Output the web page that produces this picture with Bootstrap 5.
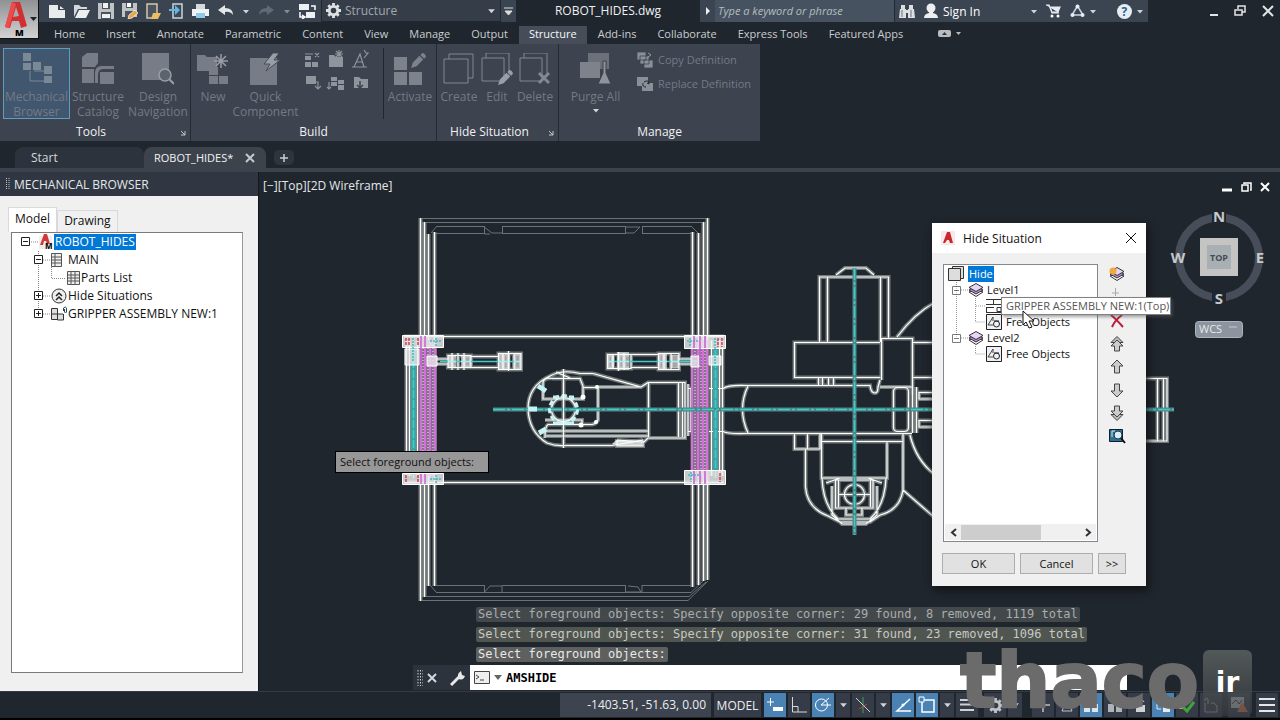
<!DOCTYPE html>
<html lang="en">
<head>
<meta charset="utf-8">
<meta name="viewport" content="width=device-width, initial-scale=1">
<title>ROBOT_HIDES.dwg</title>
<link href="https://cdn.jsdelivr.net/npm/bootstrap@5.3.0/dist/css/bootstrap.min.css" rel="stylesheet">
<style>
:root{--ink:#20262e;--panel:#3d434f;--dim:#757a84}
body{background:var(--ink);color:#d6d9dd;font:12px/15px "Open Sans","Noto Sans",sans-serif;min-width:1180px}
button,input,select{font:inherit;color:inherit;background:none;border:0;padding:0}
button{line-height:15px;white-space:nowrap}
svg{display:block;flex:none}
a{color:inherit;text-decoration:none}
/* title bar */
.app-btn{width:39px;height:39px;background:linear-gradient(#8f9193,#d2d2d2);border-right:1px solid #111;border-bottom:1px solid #111}
.title-bar{height:22px}
.bar-fill{background:#3b4552}
.quick{width:282px;padding-left:9px;gap:8px}
.workspace{width:180px;background:#353d49;border:1px solid #222831;border-top:0}
.workspace select{appearance:none;color:#a2a8ae;width:130px}
.more-cell{width:15px}
.doc-title{color:#eef0f2;line-height:22px}
.search{width:180px;background:#46525f;border-right:1px solid #222831}
.search input{width:100%;font-style:italic;font-size:11px;padding-left:3px;line-height:16px}
.search input::placeholder{color:#b6bcc2;opacity:1}
.account{width:253px}
.window-ctl{width:132px;padding-right:6px}
.ribbon-tabs{height:22px;padding-top:4px;padding-left:5px;font-size:11px;gap:1px}
.ribbon-tabs a{padding:0 10px;line-height:16px;height:18px;white-space:nowrap;color:#c9cdd1}
.ribbon-tabs a.on{background:#464d58;color:#f5f6f7}
/* ribbon */
.ribbon{height:97px}
.r-panel{background:var(--panel);border-right:1px solid #252b33;color:var(--dim);position:relative}
.panel-tools{width:191px}
.panel-build{width:246px}
.panel-hide{width:122px}
.panel-manage{width:201px}
.r-panel h2{font-size:12px;line-height:18px;color:#f0f1f3;margin:0;text-align:center}
.r-body{height:79px;padding-top:4px;padding-left:3px}
.r-btn{height:71px;padding-top:4px;display:flex;flex-direction:column;align-items:center;gap:4px;border:1px solid transparent;color:var(--dim)}
.r-btn.on{background:#41566f;border-color:#5e9dc0}
.w-wide{width:67px}
.w-mid{width:56px}
.w-slim{width:38px}
.r-rule{height:71px;width:1px;background:#22272e}
.corner{position:absolute;right:4px;bottom:5px}
.row-btn{display:flex;align-items:center;gap:5px;font-size:11px;line-height:24px;color:var(--dim)}
/* document tabs */
.doc-tabs{height:31px;padding:6px 0 0 15px;border-bottom:4px solid #3d434c}
.doc-tabs .tab-item{height:21px;line-height:21px;border-radius:8px 8px 0 0}
.start-tab{width:129px;background:#2c333d;padding-left:16px}
.file-tab{width:122px;background:#3d434c;color:#f2f3f4;padding:0 11px 0 10px;font-size:11px}
/* browser palette */
.work-row{min-height:0}
.palette{width:259px;border-right:1px solid #14181d;background:#f0f0f0;color:#111}
.palette-title{height:24px;background:#303742;color:#e4e7ea;line-height:21px;padding-left:6px}
.sheet-tabs{padding:12px 0 0 8px;height:36px}
.sheet-tabs button{border:1px solid #d9d9d9;border-bottom:0;padding:0 6px 3px;height:22px}
.sheet-tabs .on{background:#fff;height:25px}
.tree-box{background:#fff;border:1px solid #7a7a7a;border-right-color:#999;margin:0 15px 18px 11px}
.tree-line{height:18px;line-height:18px;display:flex;align-items:center;white-space:nowrap}
.picked{background:#0078d7;color:#fff;padding:0 2px}
.tree-line .picked{line-height:16px;padding:0 1px}
/* drawing area */
.view-label{position:absolute;left:4px;top:5px;color:#e4e6e8;line-height:18px}
.win-ctl{position:absolute;right:10px;top:10px}
.prompt{position:absolute;left:76px;top:279px;width:154px;height:22px;background:#979797;border:1px solid #000;color:#111;font-size:11px;line-height:19px;padding-left:4px}
.cube{position:absolute;right:12px;top:34px}
/* dialog */
.hide-dialog{position:absolute;right:134px;top:51px;width:214px;height:363px;background:#f0f0f0;color:#111;box-shadow:2px 4px 8px #111;font-size:11px}
.hide-head{height:30px;background:#fff;font-size:12px;padding:0 9px}
.level-box{width:155px;height:278px;margin:11px 0 0 11px;background:#fff;border:1px solid #828790;padding-top:1px}
.level-line{height:16px;line-height:16px;display:flex;align-items:center;white-space:nowrap;padding-left:4px}
.level-line .picked{padding:0 1px}
.side-tools{padding:14px 0 0 11px;gap:7px}
.scroll-row{height:16px;background:#f0f0f0;margin:0 1px 1px;display:flex;align-items:center;justify-content:space-between;padding:0 4px 0 5px}
.thumb{width:80px;height:15px;background:#cdcdcd;margin-right:40px}
.dlg-foot{gap:5px;padding:3px 0 0 10px}
.dlg-btn{width:73px;height:21px;background:#e1e1e1;border:1px solid #adadad;line-height:18px}
.dlg-btn.short{width:28px}
.hint{position:absolute;left:69px;top:74px;width:170px;height:18px;background:#fff;border:1px solid #808080;box-shadow:2px 2px 3px #5558;color:#555;line-height:16px;padding-left:4px;white-space:nowrap}
.pointer{position:absolute;left:90px;top:87px}
/* command line */
.cmd{position:absolute;left:154px;right:153px;bottom:1px}
.history{font:12px/15px "DejaVu Sans Mono","Liberation Mono",monospace;margin:0 0 3px 63px;gap:5px}
.history span{background:#43484b;color:#a9adb0;padding:0 2px;border-radius:2px;white-space:nowrap}
.history span:nth-child(2){background:#50554f;color:#c6c9c6}
.history span:nth-child(3){background:#5e5f5f;color:#e8e8e8}
.cmd-bar{height:25px;background:#2c333d}
.cmd-grip{width:57px}
.cmd-field{background:#fff;color:#000}
.cmd-field input{font:bold 12px/15px "DejaVu Sans Mono","Liberation Mono",monospace;width:300px;padding-top:2px}
/* status bar */
.status{height:29px;border-top:1px solid #343b45;border-bottom:2px solid #000;background:#20262e;padding:1px 2px 1px 0}
.coords{width:151px;background:var(--panel);padding-right:5px;line-height:23px;color:#eceef0;text-align:right}
.model{width:47px;background:#363c48;color:#eceef0;margin:0 3px;height:24px}
.s-tools{gap:2px}
.s-btn{height:24px;width:22px;display:grid;place-items:center;background:#353b47}
.s-btn.on{background:#4a82b4}
.s-btn.arrow{width:14px}
/* channel logo */
.mark-word{position:absolute;right:81px;bottom:-20px;font:700 76px/60px "DejaVu Sans",sans-serif;color:#6b6b6b;-webkit-text-stroke:2px #6b6b6b;z-index:3}
.mark-box{position:absolute;right:28px;bottom:-25px;width:49px;height:66px;border-radius:6px;background:linear-gradient(#5b605fdd,#383d43aa);color:#fff;font:700 28px/66px "DejaVu Sans",sans-serif;text-align:center;z-index:3}
</style>
</head>
<body class="vh-100 d-flex flex-column overflow-hidden">

<svg width="0" height="0" class="position-absolute" aria-hidden="true">
<defs>
<symbol id="dn" viewBox="0 0 8 5"><path d="M1 1h6L4 4.500z" fill="#d0d4d8"/></symbol>
<symbol id="layers" viewBox="0 0 16 14"><path d="M1 9l7-3 7 3-7 4.500z" fill="#fff" stroke="#333"/><path d="M1 7l7-4 7 4-7 4z" fill="#b48bd0" stroke="#333"/><path d="M1 4.500l7-4 7 4-7 4z" fill="#e7d5f1" stroke="#333"/></symbol>
<symbol id="freeobj" viewBox="0 0 16 16"><path d="M.5.5h15v15H.5z" fill="#eef0f3" stroke="#222"/><path d="M2 11l5-8v4M2 11h5" fill="none" stroke="#444"/><circle cx="10.500" cy="10" r="3" fill="none" stroke="#222"/><path d="M8 7h5" stroke="#222"/></symbol>
<symbol id="minus" viewBox="0 0 9 9"><path d="M.5.5h8v8h-8z" fill="#fff" stroke="#222"/><path d="M2 4.500h5" stroke="#222"/></symbol>
<symbol id="plus" viewBox="0 0 9 9"><path d="M.5.5h8v8h-8z" fill="#fff" stroke="#222"/><path d="M2 4.500h5M4.500 2v5" stroke="#222"/></symbol>
<symbol id="up" viewBox="0 0 16 16"><path d="M8 1l6 6h-3.500v7h-5V7H2z" fill="#ccc" stroke="#444"/></symbol>
<symbol id="upup" viewBox="0 0 16 16"><path d="M8 .5l6 6H2z" fill="#bbb" stroke="#444"/><path d="M8 4l6 6h-3.500v5h-5v-5H2z" fill="#ccc" stroke="#444"/></symbol>
<symbol id="pencil" viewBox="0 0 16 16"><path d="M0 16l2-6 7-7 4 4-7 7zM10 2l2-2q3 0 4 4l-2 2z"/></symbol>
</defs>
</svg>

<header class="d-flex">
  <button class="app-btn" aria-label="Application menu">
    <svg width="38" height="38" viewBox="0 0 38 38"><path d="M5 27L12 2h8l7 24-6 2-2-7h-7l-2 7z" fill="#d22f33"/><path d="M13 17l3-10 3 9z" fill="#a5adb0"/><path d="M12 2l4 2-7 24-4-1z" fill="#ef4a4c"/><path d="M30 17h7l-3.500 4z" fill="#222"/><text x="15" y="36" font-size="9" font-weight="800">M</text></svg>
  </button>
  <div class="flex-grow-1">
    <div class="title-bar d-flex">
      <div class="quick bar-fill d-flex align-items-center">
        <svg width="17" height="16" viewBox="0 0 17 16"><path d="M1 2h9v5h7v8H1zM12 3l4 3h-4z" fill="#e9ebed"/></svg>
        <svg width="17" height="16" viewBox="0 0 17 16"><path d="M1 14V2h5l2 2h6v2H5z" fill="#d4d7d9"/><path d="M2 15l4-8h11l-4 8z" fill="#eceeef"/></svg>
        <svg width="16" height="16" viewBox="0 0 16 16"><path d="M0 0h16v16H0z" fill="#bfc3c6"/><path d="M4 0h8v6H4zM3 9h10v7H3z" fill="#4a535e"/><path d="M5 0h5v5H5zM4 11h8v4H4z" fill="#f1f1f1"/></svg>
        <svg width="16" height="16" viewBox="0 0 16 16"><path d="M0 0h15v14H0z" fill="#bfc3c6"/><path d="M4 0h7v5H4zM3 8h9v6H3z" fill="#4a535e"/><path d="M5 0h4v4H5z" fill="#fff"/><path d="M7 12l6-5 3 3-6 5-4 1z" fill="#e8a94c" stroke="#fff" stroke-width=".7"/></svg>
        <svg width="15" height="17" viewBox="0 0 15 17"><path d="M1 1h10v14H1z" fill="#4a5460" stroke="#d6c6a4" stroke-width="1.500"/><path d="M5 16l2-6h8l-3 6z" fill="#edbd62"/></svg>
        <svg width="15" height="17" viewBox="0 0 15 17"><path d="M4 1h9v14H4z" fill="#3e4854" stroke="#c5d5df" stroke-width="1.500"/><path d="M0 6h6V2l5 5-5 5V8H0z" fill="#61b7e0"/></svg>
        <svg width="17" height="16" viewBox="0 0 17 16"><path d="M4 1h9v5H4z" fill="#d6d9db"/><path d="M0 6h17v7H0z" fill="#f0f1f2"/><path d="M4 10h9v5H4z" fill="#8ccae8"/></svg>
        <svg width="17" height="14" viewBox="0 0 17 14"><path d="M1 6l7-5v3q8 0 8 7-3-4-8-3v3z" fill="#e4e6e8"/></svg>
        <svg width="8" height="5"><use href="#dn"/></svg>
        <svg width="17" height="14" viewBox="0 0 17 14"><path d="M16 6L9 1v3Q1 4 1 11q3-4 8-3v3z" fill="#616974"/></svg>
        <svg width="8" height="5" opacity=".5"><use href="#dn"/></svg>
        <svg width="17" height="16" viewBox="0 0 17 16"><path d="M0 1h10v6H0zM7 9h9v6H7z" fill="#eef0f1"/><path d="M12 3h4v4M1 9v5h4M3 12l3 2-3 2" fill="none" stroke="#fff" stroke-width="1.500"/></svg>
        <svg width="8" height="5"><use href="#dn"/></svg>
      </div>
      <label class="workspace d-flex align-items-center gap-1 ps-1">
        <svg width="15" height="15" viewBox="-8 -8 16 16"><circle r="4.500" fill="none" stroke="#dfe2e4" stroke-width="3"/><path d="M0-8V-5M0 5v3M-8 0h3M5 0h3M-5.500-5.500l2 2M3.500 3.500l2 2M5.500-5.500l-2 2M-3.500 3.500l-2 2" stroke="#dfe2e4" stroke-width="3"/></svg>
        <select aria-label="Workspace"><option>Structure</option></select>
        <svg width="9" height="6" class="ms-auto me-1"><use href="#dn"/></svg>
      </label>
      <div class="more-cell bar-fill d-flex align-items-center justify-content-center"><svg width="9" height="9"><path d="M0 1h9M1 4h7L4.500 8z" fill="#ddd" stroke="#ddd"/></svg></div>
      <div class="doc-title text-center flex-grow-1">ROBOT_HIDES.dwg</div>
      <div class="more-cell bar-fill d-flex align-items-center justify-content-center"><svg width="6" height="8"><path d="M1 0v8l4-4z" fill="#eee"/></svg></div>
      <div class="search d-flex align-items-center"><input type="text" placeholder="Type a keyword or phrase" aria-label="Search"></div>
      <div class="account bar-fill d-flex align-items-center">
        <svg width="16" height="15" viewBox="0 0 16 15" class="ms-1"><path d="M2 1h4v4H2zM10 1h4v4h-4zM1 5h6v9H0zM9 5h6l1 9H9zM7 6h2v3H7z" fill="#dce0e3"/><path d="M3 6v7M12 6v7" stroke="#66707b"/></svg>
        <svg width="16" height="16" viewBox="0 0 16 16" class="ms-2"><circle cx="8" cy="5" r="4.500" fill="#eceef0"/><path d="M1 15q0-4 5-5V8h4v2q5 1 5 5z" fill="#eceef0"/></svg>
        <a href="#" class="ms-1 text-white">Sign In</a>
        <svg width="8" height="5" class="ms-auto me-2"><use href="#dn"/></svg>
        <svg width="16" height="14" viewBox="0 0 16 14"><path d="M0 1h3l3 8h7M4 3h10l-2 5H6z" fill="#e7ecf2" stroke="#e7ecf2" stroke-width="1.200"/><circle cx="6" cy="12" r="1.500" fill="#fff"/><circle cx="12" cy="12" r="1.500" fill="#fff"/></svg>
        <svg width="15" height="14" viewBox="0 0 15 14" class="ms-2"><path d="M7.500 2L2 11h11z" fill="none" stroke="#c5d6e6" stroke-width="1.500"/><circle cx="7.500" cy="2.500" r="2" fill="#e4ecf4"/><circle cx="2.500" cy="11" r="2" fill="#e4ecf4"/><circle cx="12.500" cy="11" r="2" fill="#e4ecf4"/></svg>
        <svg width="8" height="5" class="ms-1 me-3"><use href="#dn"/></svg>
        <svg width="15" height="15" viewBox="0 0 15 15" class="ms-1"><circle cx="7.500" cy="7.500" r="7.500" fill="#e6edf3"/><text x="4.500" y="12" font-size="12" font-weight="700" fill="#2c5f91">?</text></svg>
        <svg width="8" height="5" class="ms-1 me-1"><use href="#dn"/></svg>
      </div>
      <div class="window-ctl d-flex justify-content-end align-items-center gap-3">
        <svg width="8" height="12"><path d="M0 10h8" stroke="#e2e4e6" stroke-width="2"/></svg>
        <svg width="12" height="12"><path d="M4 4V1h7v6H8M1 5h7v5H1z" fill="none" stroke="#e2e4e6" stroke-width="1.500"/></svg>
        <svg width="12" height="12"><path d="M1 1l10 10M11 1L1 11" stroke="#e2e4e6" stroke-width="2"/></svg>
      </div>
    </div>
    <nav class="ribbon-tabs d-flex">
      <a href="#">Home</a><a href="#">Insert</a><a href="#">Annotate</a><a href="#">Parametric</a><a href="#">Content</a><a href="#">View</a><a href="#">Manage</a><a href="#">Output</a><a href="#" class="on">Structure</a><a href="#">Add-ins</a><a href="#">Collaborate</a><a href="#">Express Tools</a><a href="#">Featured Apps</a>
      <svg width="24" height="16" viewBox="0 0 24 16" class="ms-4"><rect y="4" width="13" height="7" rx="2" fill="#b9bdc1"/><path d="M4 9l2.500-3L9 9z" fill="#333"/><path d="M18 6h5l-2.500 3z" fill="#b9bdc1"/></svg>
    </nav>
  </div>
</header>

<section class="ribbon d-flex" aria-label="Ribbon">
  <div class="r-panel panel-tools">
    <div class="r-body d-flex">
      <button class="r-btn on w-wide"><svg width="32" height="32" viewBox="0 0 32 32" fill="#7b8896"><path d="M2 0h8v8H2zM2 10h8v7H2zM12 9h8v8h-8zM23 13h8v8h-8zM23 23h8v7h-8z"/><path d="M9 18v10h14M13 18h10" fill="none" stroke="#7b8896"/></svg>Mechanical<br>Browser</button>
      <button class="r-btn w-mid"><svg width="34" height="32" viewBox="0 0 34 32" fill="#777c86"><path d="M1 4l5-4h11v10l-3 4H1zM1 16h12v14H1zM14 20q0-7 7-7h12v3H22q-5 0-5 6v8h-3zM19 19h14v12H19z"/></svg>Structure<br>Catalog</button>
      <button class="r-btn flex-grow-1"><svg width="32" height="32" viewBox="0 0 32 32"><path d="M0 0h27v27H0z" fill="#777c86"/><circle cx="23" cy="22" r="6" fill="#5d636d" stroke="#9a9ea6" stroke-width="1.500"/><path d="M27 26l5 5" stroke="#9a9ea6" stroke-width="2"/></svg>Design<br>Navigation</button>
    </div>
    <h2 class="pe-2">Tools</h2>
    <svg class="corner" width="6" height="6"><path d="M1 1l4 4M5 1v4H1" fill="none" stroke="#c5c8cc"/></svg>
  </div>
  <div class="r-panel panel-build">
    <div class="r-body d-flex">
      <button class="r-btn w-slim"><svg width="32" height="32" viewBox="0 0 32 32" fill="#777c86"><path d="M0 2h8l2 2h10v14H0zM12 14h9v8h-9zM12 23h9v8h-9zM22 23h9v8h-9z"/><path d="M24 1v14M17 8h14M19 3l10 10M29 3L19 13" stroke="#999da5" stroke-width="1.500"/></svg>New</button>
      <button class="r-btn w-wide"><svg width="32" height="32" viewBox="0 0 32 32"><path d="M0 5h27v27H0z" fill="#777c86"/><path d="M23 0l-9 11h6l-4 7 14-11h-6l5-7z" fill="#9a9ea6" stroke="#484e58"/></svg>Quick<br>Component</button>
      <svg width="80" height="48" viewBox="0 0 80 48" fill="#90949c" class="ms-1"><path d="M2 8h6v4H2zM2 14h6v5H2zM9 14h6v5H9zM26 7h5l2 2h7v10H26zM3 28h10v8H3zM28 29h6v4h-6zM35 32h6v4h-6zM35 37h6v5h-6zM28 34h6v4h-6zM51 29h5l2 2h7v9H51z"/><path d="M2 6h8M12 5l4 4M16 5l-4 4M36 2v8M32 6h8M33 3l6 6M39 3l-6 6M61 2l2 3h2l-4 5M51 19l6-13 4 13M49 19h15M53 14h7M9 34h6v6M12 38l3 3 3-3M26 34v7M24 39l2 2 2-2" fill="none" stroke="#90949c" stroke-width="1.200"/><path d="M57 33v6M54 37l3 3 3-3" fill="none" stroke="#3d434f" stroke-width="1.500"/></svg>
      <div class="r-rule"></div>
      <button class="r-btn flex-grow-1"><svg width="34" height="32" viewBox="0 0 34 32" fill="#7d828b"><path d="M1 4h13v13H1zM1 19h13v13H1zM16 19h13v13H16z"/><svg x="18" y="0" width="15" height="15"><use href="#pencil"/></svg></svg>Activate</button>
    </div>
    <h2>Build</h2>
  </div>
  <div class="r-panel panel-hide">
    <div class="r-body d-flex">
      <button class="r-btn w-slim"><svg width="32" height="32" viewBox="0 0 32 32" fill="none" stroke="#838891"><path d="M1 6h24v24H1zM6 6V1h24v24h-5"/></svg>Create</button>
      <button class="r-btn w-slim"><svg width="32" height="32" viewBox="0 0 32 32" fill="none" stroke="#838891"><path d="M1 5h22v23H1zM5 5V0h23v23h-5"/><svg x="17" y="17" width="15" height="15" fill="#9a9ea6" stroke="none"><use href="#pencil"/></svg></svg>Edit</button>
      <button class="r-btn w-slim"><svg width="32" height="32" viewBox="0 0 32 32" fill="none" stroke="#838891"><path d="M1 5h22v23H1zM5 5V0h23v23h-5"/><path d="M20 20l10 10M30 20L20 30" stroke-width="3"/></svg>Delete</button>
    </div>
    <h2 class="pe-3">Hide Situation</h2>
    <svg class="corner" width="6" height="6"><path d="M1 1l4 4M5 1v4H1" fill="none" stroke="#c5c8cc"/></svg>
  </div>
  <div class="r-panel panel-manage border-0">
    <div class="r-body d-flex">
      <button class="r-btn w-wide"><svg width="32" height="32" viewBox="0 0 32 32"><path d="M8 0h21v16H8z" fill="#6b7079"/><path d="M0 9h20v16H0z" fill="#7d828b"/><path d="M23 8h3v12l5 11H18l5-11z" fill="#8f939b" stroke="#3d434f"/></svg>Purge All<svg width="8" height="5"><use href="#dn"/></svg></button>
      <div class="ms-1 ps-1">
        <button class="row-btn"><svg width="16" height="16" viewBox="0 0 16 16" fill="#8b8f97" stroke="#3d434f" stroke-width=".8"><path d="M0 0h9v8H0zM3 4h9v8H3zM7 8h9v8H7z"/><path d="M11 1l3 2-3 2" stroke="#aaa" fill="none"/></svg>Copy Definition</button>
        <button class="row-btn"><svg width="16" height="16" viewBox="0 0 16 16" fill="#8b8f97"><path d="M0 1h11v9H0zM5 7h11v8H5z"/><path d="M7 6q5-3 5 2l-2-1M9 11q-4 0-3-4" fill="none" stroke="#22272e"/></svg>Replace Definition</button>
      </div>
    </div>
    <h2>Manage</h2>
  </div>
</section>

<nav class="doc-tabs d-flex align-items-center">
  <a href="#" class="tab-item start-tab">Start</a>
  <a href="#" class="tab-item file-tab d-flex align-items-center">ROBOT_HIDES*<svg width="10" height="10" class="ms-auto"><path d="M1 1l8 8M9 1L1 9" stroke="#c5c8cc" stroke-width="2"/></svg></a>
  <button class="ms-1 px-1" aria-label="New tab"><svg width="20" height="16" viewBox="0 0 20 16"><rect width="20" height="15" rx="5" fill="#2f353e"/><path d="M6 8h8M10 4v8" stroke="#cbced1" stroke-width="1.500"/></svg></button>
</nav>

<main class="work-row d-flex flex-grow-1">
  <aside class="palette d-flex flex-column flex-shrink-0">
    <div class="palette-title d-flex align-items-center gap-1"><svg width="4" height="12"><path d="M.5 0v12M3 0v12" stroke="#c5c8cc" stroke-dasharray="1 1"/></svg>MECHANICAL BROWSER</div>
    <div class="sheet-tabs d-flex align-items-end"><button class="on">Model</button><button>Drawing</button></div>
    <div class="tree-box flex-grow-1">
      <div class="tree-line ps-2"><svg width="34" height="18" viewBox="0 0 34 18"><svg x="1" y="4" width="9" height="9"><use href="#minus"/></svg><path d="M11 9h7" stroke="#888" stroke-dasharray="1 1"/><path d="M19 3h13v13H19z" fill="#eee"/><path d="M20 12L24 1h3l3 10h-3l-1-3h-2l-1 4z" fill="#d2373b"/><text x="25" y="16" font-size="8" font-weight="700">M</text></svg><span class="picked">ROBOT_HIDES</span></div>
      <div class="tree-line ps-3"><svg width="40" height="18" viewBox="0 0 40 18" fill="none"><path d="M10.500 0v18M15 9h8M23.500 14v4" stroke="#888" stroke-dasharray="1 1"/><svg x="6" y="4" width="9" height="9"><use href="#minus"/></svg><path d="M23.500 2.500h10v13h-10zM23 6h11M23 9h11M23 12h11M27 3v12" fill="#eee" stroke="#555"/></svg>MAIN</div>
      <div class="tree-line ps-3"><svg width="53" height="18" viewBox="0 0 53 18" fill="none"><path d="M10.500 0v18M23.500 0v9.500h14" stroke="#888" stroke-dasharray="1 1"/><path d="M39.500 2.500h12v13h-12zM39 6h13M39 9h13M39 12h13M43 3v12M47 3v12" fill="#eee" stroke="#555"/></svg>Parts List</div>
      <div class="tree-line ps-3"><svg width="40" height="18" viewBox="0 0 40 18"><path d="M10.500 0v18M15 9h8" stroke="#888" stroke-dasharray="1 1"/><svg x="6" y="4" width="9" height="9"><use href="#plus"/></svg><circle cx="31" cy="9" r="7" fill="#eee" stroke="#333"/><path d="M28 9l3-3 3 3M28 13l3-3 3 3" fill="none" stroke="#222" stroke-width="1.500"/></svg>Hide Situations</div>
      <div class="tree-line ps-3"><svg width="40" height="18" viewBox="0 0 40 18"><path d="M10.500 0v9M15 9h8" stroke="#888" stroke-dasharray="1 1"/><svg x="6" y="4" width="9" height="9"><use href="#plus"/></svg><path d="M23.500 3.500h6v11h-6zM23 9h12M29.500 9v6h6V9" fill="#ddd" stroke="#333"/><path d="M35.500 6V3q2-2 3 0v4q-1 2-2 0V4" fill="none" stroke="#1b4d66"/></svg>GRIPPER ASSEMBLY NEW:1</div>
    </div>
  </aside>

  <div class="position-relative flex-grow-1">
    <svg class="position-absolute top-0 start-0 w-100 h-100" viewBox="259 172 1021 519" preserveAspectRatio="xMinYMin meet" fill="none" aria-label="Robot drawing">
      <defs>
        <g id="shape">
          <!-- frame rails -->
          <path d="M420.500 218V601M424.500 222V597M428.500 234V586M434.500 232V586M692.500 232V587M698.500 233V585M703.500 222V581M707.500 218V580"/>
          <path d="M404 336.500H724M404 482.500H724"/>
          <path d="M406.500 340V476M409.500 340V476M417.500 340V476M711.500 340V476M719.500 340V476M722.500 340V476"/>
          <!-- gripper body -->
          <path d="M593 373.500H580Q563 369 550 376Q528 386 528 409Q529 432 547 443Q555 446 563 445.500H612L643 440M593 373.500L641 387L648 382.500H685V438H648L644 442L617 440M596 387H641M546 436H648M648.500 382V437M678.500 382V437M682.500 382V437M552 378.500H580L583 386V399H543V382Q545 377 552 378.500M583 387.500H598V420Q596 424 592 424.500H548Q545 426 545 438M545 420H582V427M545 431H648M563.500 369V448M556 372L570 378"/>
          <circle cx="563.500" cy="409.500" r="12"/>
          <path d="M617 441L643 441V446H617z"/>
          <!-- arm -->
          <path d="M688 388.500H723Q728 385 745 385.500H870Q871 393 875 393Q878 393 878 387L880 380M688 431.500H723Q728 434 745 433.500H912M748 386Q737 409 748 433M688 384V436M691 388V431"/>
          <path d="M880.500 377.500H794.500V342.500H880M819.500 342V277H888.500V338M827.500 342V277M880.500 277V342M836 275L845 268H866L874 275M881.500 380V338.500H912.500V395M912 342.500H932M912 377.500H932M818.500 378V385M822.500 378V385M828.500 378V385M833.500 378V385M880 387H912M897 337Q915 313 934 303"/>
          <rect x="893.500" y="387.500" width="15" height="44" rx="4"/>
          <path d="M912.500 387V433M916.500 387V433M932 392.500H919V399H932M932 420.500H919V427H932"/>
          <path d="M794.500 433V449H820V433M807.500 433V449M805.500 449V487Q807 508 828 516L840 522H870L880 515Q900 510 903 490V433M821.500 433V478H887V441M821 441.500H903M822 478Q823 505 838 519H870Q885 505 886 478M835.500 480H873V508H835.500zM838.500 480V507M870.500 480V507M838 494.500H870M832 486V515L842 524H866L877 515V486M846 508V515H862V508M826 483L840 478M882 483L868 478M910 435Q916 460 934 474M903 490L934 517"/>
          <circle cx="854.500" cy="494.500" r="10"/>
          <path d="M1145 378.500H1167V441H1145M1157.500 378V441M1163.500 378V441"/>
          <!-- cylinders -->
          <path d="M432 359H448V364H432M448 355.500H471V367.500H448zM452 353V370M458 353V370M464 353V370M471 356.500H498M471 367.500H498M498.500 353.500H521V369.500H498.500zM508.500 351V371M503 353V370M514 354V369"/>
          <path d="M607.500 354.500H631V368.500H607.500zM613 354V369M618.500 352V371M624 353V370M631 354.500H658M631 367.500H658M658.500 353.500H679V369.500H658.500zM664 353V370M671 353V370M679 359H694M679 364H694"/>
        </g>
      </defs>
      <g stroke="#6b7177">
        <path d="M420 218.500H708M424 222.500H704M437 226.500H484M502 226.500H625M642 226.500H691M433 233.500H484M502 233.500H625M642 233.500H694M431 233L437 226M691 226L698 233M484.500 226V234L490 234M484 227L492 233H502M502.500 226V234M625.500 226V234M642.500 226V234M625 227H640L634 233H625"/>
        <path d="M436 585.500H484M502 585.500H625M642 585.500H691M436 592.500H691L704 580M424 596.500H689L706 582M420 600.500H688L708 581M484.500 585V592L490 586H502V592M625.500 585V592H642V585M628 586L638 587L641 592M430 585L436 592"/>
      </g>
      <use href="#shape" stroke="#747b7b" stroke-width="4"/>
      <use href="#shape" stroke="#fff" stroke-width="1.200"/>
      <path d="M411 348h5v122h-5zM713 348h5v122h-5z" fill="#39a5a3"/>
      <path d="M419 340h18v136h-18zM691 340h18v136h-18z" fill="#8e6d95"/>
      <path d="M421 340V480M425 340V480M430 340V480M435 340V480M692 340V480M698 340V480M703 340V480M707 340V480" stroke="#e873ed" stroke-width="1.500"/>
      <path d="M423 345V476M428 345V476M433 345V476M695 345V476M701 345V476M705 345V476" stroke="#eee" stroke-dasharray="1 2"/>
      <g stroke="#4f8585" stroke-width="4"><path d="M493 409.500H1174M854.500 268V535"/></g>
      <g stroke="#38cfd0" stroke-width="1.500"><path d="M493 409.500H1174M854.500 268V535" stroke-dasharray="12 2 3 2"/><path d="M413.500 340V480M715.500 340V480" stroke-dasharray="8 2"/><path d="M440 361.500H520M608 361.500H700"/></g>
      <!-- bolted corner blocks -->
      <g fill="#eee" stroke="#fff"><path d="M402.500 335.500h41v12h-41zM402.500 473.500h41v11h-41zM684.500 335.500h41v13h-41zM684.500 470.500h41v14h-41z" fill-opacity=".82"/><path d="M405 349h14v16h-14zM427 356h10v10h-10zM691 356h8v11h-8zM709 356h12v9h-12z" fill-opacity=".75"/></g>
      <g stroke-width="1.500"><path d="M406 338V346M409 338V346M418 338V346M406 475V483M418 475V483M718 338V347M722 338V347M720 473V482" stroke="#d43b4c" stroke-dasharray="3 1"/><path d="M413 338V362M430 341H441M436 338V346M687 341H698M690 338V347M688 475H699M691 472V482M430 479H441M436 475V483M715 338V364" stroke="#43b9be" stroke-dasharray="2 1"/><path d="M421 336V365M425 336V347M694 336V348M700 336V365M705 336V348M421 474V484M425 474V484M694 471V484M700 471V484M705 471V484" stroke="#c65fd0"/></g>
      <!-- white collars on the cylinders -->
      <g fill="#fff" opacity=".6"><path d="M448 356h8v11h-8zM461 355h10v13h-10zM498 353h12v17h-12zM514 354h7v15h-7zM607 354h7v15h-7zM617 352h12v18h-12zM658 354h9v15h-9zM671 355h8v13h-8z"/></g>
      <!-- bolts of the gripper -->
      <g stroke="#c4f4f4"><circle cx="563.500" cy="409.500" r="14" stroke-width="3" stroke-dasharray="5 3"/><path d="M528 409H537M538 386L546 391M539 433L546 429" stroke-width="5"/><path d="M553 397H574M553 423H574" stroke-width="3" stroke-dasharray="5 3"/></g>
      <g fill="#fff"><circle cx="583" cy="397" r="2.500"/><circle cx="597" cy="387" r="2"/><circle cx="581" cy="425" r="2.500"/><circle cx="596" cy="422" r="2"/><path d="M616 440l8 1 18 1v4h-22l-8-2z" opacity=".7"/></g>
      <path d="M563.500 369V448" stroke="#fff"/>
    </svg>

    <div class="view-label">[−][Top][2D Wireframe]</div>
    <div class="win-ctl d-flex gap-2">
      <svg width="11" height="11"><path d="M0 8h10" stroke="#fff" stroke-width="3"/></svg>
      <svg width="11" height="11"><path d="M3 2V1h7v7H9M1 3h6v6H1z" fill="none" stroke="#fff" stroke-width="1.500"/></svg>
      <svg width="10" height="11"><path d="M1 1l8 8M9 1L1 9" stroke="#fff" stroke-width="2"/></svg>
    </div>
    <div class="prompt">Select foreground objects:</div>

    <svg class="cube" width="98" height="136" viewBox="1170 206 98 136" font-weight="700" fill="#c5c9cc">
      <circle cx="1219" cy="257.500" r="40" fill="none" stroke="#474e59" stroke-width="8"/>
      <path d="M1200 238h38v38h-38z" fill="#c4c5c2"/><path d="M1207 245h24v24h-24z" fill="#a9b0b4"/>
      <g text-anchor="middle" font-size="15"><path d="M1212 209h14v14h-14zM1212 290h14v15h-14z" fill="#20262e"/><text x="1219" y="222">N</text><text x="1219" y="304">S</text><text x="1178" y="263">W</text><text x="1260" y="263">E</text><text x="1219" y="261" font-size="9" fill="#454c55">TOP</text></g>
      <rect x="1195.500" y="321.500" width="47" height="16" rx="3" fill="#8c949f" stroke="#adb3bb"/><text x="1199" y="333" font-size="11" font-weight="400" fill="#e6e9ec">WCS</text><path d="M1229 327h8" stroke="#c5cad0"/>
    </svg>

    <div class="mark-word">thaco</div>
    <div class="mark-box">ir</div>

    <div class="cmd">
      <div class="history d-flex flex-column align-items-start">
        <span>Select foreground objects: Specify opposite corner: 29 found, 8 removed, 1119 total</span>
        <span>Select foreground objects: Specify opposite corner: 31 found, 23 removed, 1096 total</span>
        <span>Select foreground objects:</span>
      </div>
      <div class="cmd-bar d-flex">
        <div class="cmd-grip d-flex align-items-center ps-1 gap-1">
          <svg width="6" height="16"><path d="M1 0v16M3.500 0v16M6 0v16" stroke="#cfd2d5" stroke-dasharray="1.500 1.500"/></svg>
          <svg width="11" height="10"><path d="M1 1l8 8M9 1L1 9" stroke="#d5d8da" stroke-width="2"/></svg>
          <svg width="16" height="16" viewBox="0 0 16 16" class="ms-2"><path d="M1 15l8-8" stroke="#e6e8ea" stroke-width="3"/><path d="M9 9q-3-5 2-8l1 4 3 1q-2 5-6 3z" fill="#e6e8ea"/></svg>
        </div>
        <label class="cmd-field d-flex align-items-center flex-grow-1 ps-1 gap-1">
          <svg width="16" height="13" viewBox="0 0 16 13"><path d="M.5.5h15v12H.5z" fill="#eee" stroke="#444"/><path d="M2 4l3 2-3 2M6 9h4" fill="none" stroke="#444"/></svg>
          <svg width="8" height="5"><path d="M0 0h8L4 5z" fill="#666"/></svg>
          <input type="text" value="AMSHIDE" aria-label="Command">
        </label>
      </div>
    </div>

    <div class="hide-dialog" role="dialog" aria-label="Hide Situation">
      <div class="hide-head d-flex align-items-center">
        <svg width="14" height="14" viewBox="0 0 14 14" class="me-1"><path d="M0 0h14v14H0z" fill="#f9e8e8"/><path d="M2 12L6 1h3l3 11H9L8 9H6l-2 3z" fill="#c6282d"/></svg>
        <span class="ms-1">Hide Situation</span>
        <button class="ms-auto" aria-label="Close"><svg width="12" height="12"><path d="M1 1l10 10M11 1L1 11" stroke="#111"/></svg></button>
      </div>
      <div class="d-flex">
        <div class="level-box d-flex flex-column">
          <div class="level-line"><svg width="20" height="16" viewBox="0 0 20 16" fill="#ddd" stroke="#333"><path d="M4.500.5h11v12h-11z"/><path d="M.5 2.500h12v12H.5z"/></svg><span class="picked">Hide</span></div>
          <div class="level-line"><svg width="39" height="16" viewBox="0 0 39 16"><path d="M8.500 0v16M13 8h7" stroke="#999" stroke-dasharray="1 1"/><svg x="4" y="4" width="9" height="9" opacity=".6"><use href="#minus"/></svg><svg x="20" y="1" width="16" height="14"><use href="#layers"/></svg></svg>Level1</div>
          <div class="level-line"><svg width="58" height="16" viewBox="0 0 58 16"><path d="M8.500 0v16M27.500 0v16M28 8h10" stroke="#999" stroke-dasharray="1 1"/><path d="M38 1.500h15M38 6.500h15M38 9.500h8M38 14.500h15M45.500 1v5M38.500 9v6M49 9.500h4v4h-4z" fill="none" stroke="#333"/></svg></div>
          <div class="level-line"><svg width="58" height="16" viewBox="0 0 58 16"><path d="M8.500 0v16M27.500 0v8h10" fill="none" stroke="#999" stroke-dasharray="1 1"/><svg x="38" width="16" height="16"><use href="#freeobj"/></svg></svg>Free Objects</div>
          <div class="level-line"><svg width="39" height="16" viewBox="0 0 39 16"><path d="M8.500 0v8M13 8h7" stroke="#999" stroke-dasharray="1 1"/><svg x="4" y="4" width="9" height="9" opacity=".6"><use href="#minus"/></svg><svg x="20" y="1" width="16" height="14"><use href="#layers"/></svg></svg>Level2</div>
          <div class="level-line"><svg width="58" height="16" viewBox="0 0 58 16"><path d="M27.500 0v8h10" fill="none" stroke="#999" stroke-dasharray="1 1"/><svg x="38" width="16" height="16"><use href="#freeobj"/></svg></svg>Free Objects</div>
          <div class="scroll-row mt-auto"><svg width="8" height="9"><path d="M6 1L2 4.500 6 8" fill="none" stroke="#333" stroke-width="2"/></svg><div class="thumb"></div><svg width="8" height="9"><path d="M2 1l4 3.500L2 8" fill="none" stroke="#333" stroke-width="2"/></svg></div>
        </div>
        <div class="side-tools d-flex flex-column">
          <button aria-label="New level"><svg width="16" height="14" viewBox="0 0 16 14"><use href="#layers" width="16" height="14"/><circle cx="4" cy="4" r="3.500" fill="#f2a93b"/></svg></button>
          <button class="mb-2" aria-label="Add"><svg width="16" height="10"><path d="M6.500 0v8M3 5h7" stroke="#aaa"/></svg></button>
          <button aria-label="Remove"><svg width="16" height="16"><path d="M2 2q5 4 12 12M13 2Q6 7 3 14" stroke="#b91e3b" stroke-width="2" fill="none"/></svg></button>
          <button aria-label="Move to top"><svg width="16" height="16"><use href="#upup"/></svg></button>
          <button aria-label="Move up"><svg width="16" height="16"><use href="#up"/></svg></button>
          <button aria-label="Move down"><svg width="16" height="16" viewBox="0 0 16 16"><path d="M8 15l6-6h-3.500V2h-5v7H2z" fill="#ccc" stroke="#444"/></svg></button>
          <button aria-label="Move to bottom"><svg width="16" height="16" viewBox="0 0 16 16"><path d="M8 15.500l6-6H2z" fill="#bbb" stroke="#444"/><path d="M8 12l6-6h-3.500V1h-5v5H2z" fill="#ccc" stroke="#444"/></svg></button>
          <button aria-label="Preview"><svg width="17" height="16" viewBox="0 0 17 16"><path d="M.5 1.500h13v12H.5z" fill="#2f6f93" stroke="#111d2a"/><path d="M3 9V3h3" stroke="#cfe8f5" fill="none"/><circle cx="9" cy="7" r="4" fill="#d6f0fb" stroke="#173848"/><path d="M12 10l4 5" stroke="#111" stroke-width="2"/></svg></button>
        </div>
      </div>
      <div class="dlg-foot d-flex mt-2">
        <button class="dlg-btn">OK</button>
        <button class="dlg-btn">Cancel</button>
        <button class="dlg-btn short">&gt;&gt;</button>
      </div>
      <div class="hint">GRIPPER ASSEMBLY NEW:1(Top)</div>
      <svg class="pointer" width="13" height="19" viewBox="0 0 13 19"><path d="M1 1v14l3-3 3 6 3-1-3-6h5z" fill="#fff" stroke="#111"/></svg>
    </div>
  </div>
</main>

<footer class="status d-flex justify-content-end">
  <div class="coords">-1403.51, -51.63, 0.00</div>
  <button class="model">MODEL</button>
  <div class="s-tools d-flex">
    <button class="s-btn on" aria-label="Dynamic input"><svg width="18" height="16"><path d="M1 5h7M4.500 1v8" stroke="#fff"/><path d="M7 10h10v4H7z" fill="#fff"/></svg></button>
    <button class="s-btn" aria-label="Ortho"><svg width="18" height="18"><path d="M2.500 1v15H17M3 10.500h5V16" fill="none" stroke="#d5d8da"/></svg></button>
    <button class="s-btn on" aria-label="Polar tracking"><svg width="18" height="18"><circle cx="7.500" cy="9" r="6" fill="none" stroke="#fff"/><path d="M7 9h10M7 9l8-7" stroke="#fff"/></svg></button>
    <button class="s-btn arrow" aria-label="Polar settings"><svg width="9" height="6"><use href="#dn"/></svg></button>
    <button class="s-btn" aria-label="Isometric"><svg width="18" height="18"><path d="M9 1v16" stroke="#3fa35c"/><path d="M2 2l14 14" stroke="#cfd2d5"/><path d="M13 8l-8 5" stroke="#b44"/></svg></button>
    <button class="s-btn arrow" aria-label="Isometric settings"><svg width="9" height="6"><use href="#dn"/></svg></button>
    <button class="s-btn on" aria-label="Snap tracking"><svg width="18" height="18"><path d="M16 3L3 15h14" fill="none" stroke="#fff" stroke-width="1.500"/><circle cx="9" cy="9" r="1.500" fill="#fff"/></svg></button>
    <button class="s-btn on" aria-label="Object snap"><svg width="18" height="18"><path d="M4 4h12v12H4z" fill="none" stroke="#fff" stroke-width="1.500"/><path d="M1 1h5v5H1z" fill="#4a82b4" stroke="#fff"/></svg></button>
    <button class="s-btn arrow" aria-label="Snap settings"><svg width="9" height="6"><use href="#dn"/></svg></button>
    <button class="s-btn" aria-label="Lineweight"><svg width="16" height="16"><path d="M1 3h14M1 7.500h14M1 13h14" stroke="#cfd2d5" stroke-width="2"/></svg></button>
    <button class="s-btn ms-1" aria-label="Workspace"><svg width="15" height="15" viewBox="-8 -8 16 16"><circle r="4.500" fill="none" stroke="#bfc3c7" stroke-width="3"/><path d="M0-8V-5M0 5v3M-8 0h3M5 0h3M-5.500-5.500l2 2M3.500 3.500l2 2M5.500-5.500l-2 2M-3.500 3.500l-2 2" stroke="#bfc3c7" stroke-width="3"/></svg></button>
    <button class="s-btn arrow me-2" aria-label="Workspace settings"><svg width="9" height="6"><use href="#dn"/></svg></button>
    <button class="s-btn" aria-label="Monitor"><svg width="16" height="16"><path d="M8 1v14M1 8h14" stroke="#9ba0a5" stroke-width="2"/></svg></button>
    <button class="s-btn" aria-label="Scale"><svg width="16" height="16"><path d="M8 2l5 12H3z" fill="none" stroke="#bfc3c7"/></svg></button>
    <button class="s-btn on" aria-label="Power snap"><svg width="16" height="16"><path d="M1 7h6v8H1zM9 7h6v8H9z" fill="#dfe3e6"/></svg></button>
    <button class="s-btn" aria-label="Structure"><svg width="16" height="16"><path d="M1 7h6v8H1zM9 7h6v8H9z" fill="#aeb3b8"/></svg></button>
    <button class="s-btn" aria-label="Lock"><svg width="16" height="16"><path d="M5 8h9v7H5z" fill="#cfd2d5"/><path d="M8 8V4q3-3 5 1" fill="none" stroke="#cfd2d5"/></svg></button>
    <button class="s-btn on" aria-label="Lock layer"><svg width="16" height="16"><path d="M2 1v11h4M5 2h9v4" fill="none" stroke="#e6eaed"/><path d="M8 8h7v7H8z" fill="#e6eaed"/></svg></button>
    <button class="s-btn" aria-label="Hardware"><svg width="18" height="16"><path d="M1 5l5-3v10H1z" fill="#d59b3c"/><path d="M5 10l4 4 7-9" fill="none" stroke="#43a33b" stroke-width="3"/></svg></button>
    <button class="s-btn" aria-label="Attach"><svg width="16" height="16"><path d="M2 6v9h12V9l-3-3H8M2 4V2q2-2 3 0v5" fill="none" stroke="#d0aaa2"/></svg></button>
    <button class="s-btn ms-1" aria-label="Notifications"><svg width="18" height="18"><path d="M1 1h13v11H1z" fill="#c9cdd1"/><path d="M2 8l4-4 3 4 3-4" stroke="#333" fill="none"/><path d="M12 6l6 10H7z" fill="#e97840"/></svg></button>
    <button class="s-btn ms-1" aria-label="Customize"><svg width="18" height="16"><path d="M1 2h16M1 8h16M1 14h16" stroke="#e4e6e8" stroke-width="2"/></svg></button>
  </div>
</footer>
<script src="https://cdn.jsdelivr.net/npm/bootstrap@5.3.0/dist/js/bootstrap.bundle.min.js"></script>
</body>
</html>
